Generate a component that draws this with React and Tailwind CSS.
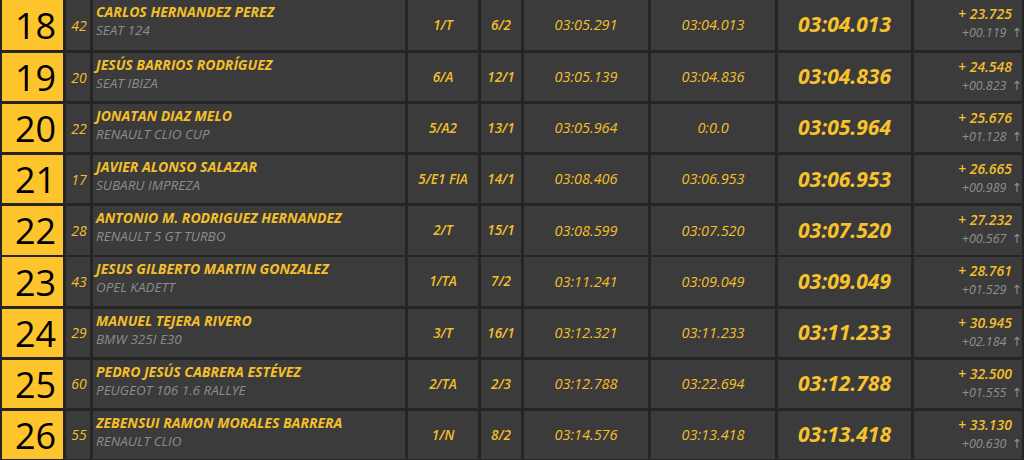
import React from 'react'

const rows = [
  ['18', '42', 'CARLOS HERNANDEZ PEREZ', 'SEAT 124', '1/T', '6/2', '03:05.291', '03:04.013', '03:04.013', '+ 23.725', '+00.119'],
  ['19', '20', 'JESÚS BARRIOS RODRÍGUEZ', 'SEAT IBIZA', '6/A', '12/1', '03:05.139', '03:04.836', '03:04.836', '+ 24.548', '+00.823'],
  ['20', '22', 'JONATAN DIAZ MELO', 'RENAULT CLIO CUP', '5/A2', '13/1', '03:05.964', '0:0.0', '03:05.964', '+ 25.676', '+01.128'],
  ['21', '17', 'JAVIER ALONSO SALAZAR', 'SUBARU IMPREZA', '5/E1 FIA', '14/1', '03:08.406', '03:06.953', '03:06.953', '+ 26.665', '+00.989'],
  ['22', '28', 'ANTONIO M. RODRIGUEZ HERNANDEZ', 'RENAULT 5 GT TURBO', '2/T', '15/1', '03:08.599', '03:07.520', '03:07.520', '+ 27.232', '+00.567'],
  ['23', '43', 'JESUS GILBERTO MARTIN GONZALEZ', 'OPEL KADETT', '1/TA', '7/2', '03:11.241', '03:09.049', '03:09.049', '+ 28.761', '+01.529'],
  ['24', '29', 'MANUEL TEJERA RIVERO', 'BMW 325I E30', '3/T', '16/1', '03:12.321', '03:11.233', '03:11.233', '+ 30.945', '+02.184'],
  ['25', '60', 'PEDRO JESÚS CABRERA ESTÉVEZ', 'PEUGEOT 106 1.6 RALLYE', '2/TA', '2/3', '03:12.788', '03:22.694', '03:12.788', '+ 32.500', '+01.555'],
  ['26', '55', 'ZEBENSUI RAMON MORALES BARRERA', 'RENAULT CLIO', '1/N', '8/2', '03:14.576', '03:13.418', '03:13.418', '+ 33.130', '+00.630'],
]

const cell = 'bg-[#3b3b3b] flex items-center justify-center'

function Row({ r, first }) {
  const [pos, num, name, car, cls, cat, t1, t2, best, diff, prev] = r
  return (
    <div className={`flex gap-[3px] ${first ? 'h-[50px]' : 'h-[48.2px]'}`}>
      <div className="w-[61px] bg-[#fdc52b] flex items-center justify-center text-black text-[36px] font-medium leading-none pl-[6px] pt-[2px]">
        {pos}
      </div>
      <div className={`${cell} w-[24px] text-[#f4bf2a] italic text-[14px] pl-[2px]`}>{num}</div>
      <div className="bg-[#3b3b3b] w-[312px] pl-[3px] pt-[3px] italic leading-[18px]">
        <div className="text-[#f4bf2a] font-bold text-[14px]">{name}</div>
        <div className="text-[#8c8c8c] text-[13.5px]">{car}</div>
      </div>
      <div className={`${cell} w-[70px] text-[#f4bf2a] italic font-semibold text-[13.5px]`}>{cls}</div>
      <div className={`${cell} w-[40px] text-[#f4bf2a] italic font-semibold text-[13.5px]`}>{cat}</div>
      <div className={`${cell} w-[124px] text-[#f4bf2a] italic font-medium text-[14.5px]`}>{t1}</div>
      <div className={`${cell} w-[124px] text-[#f4bf2a] italic font-medium text-[14.5px]`}>{t2}</div>
      <div className={`${cell} w-[133px] text-[#f8c22b] italic font-bold text-[21px]`}>{best}</div>
      <div className="bg-[#3b3b3b] w-[108px] flex flex-col items-end pr-[10px] pt-[4px] italic leading-[19px]">
        <div className="text-[#f4bf2a] font-semibold text-[14px]">{diff}</div>
        <div className="text-[#8f8f8f] text-[12.5px] -mr-[10px]">
          {prev}<span className="not-italic ml-[5px]">↑</span>
        </div>
      </div>
    </div>
  )
}

export default function App() {
  return (
    <div
      className="w-[1024px] h-[460px] overflow-hidden bg-[#252525] pl-[2px] flex flex-col gap-[2.94px]"
      style={{ fontFamily: '"Open Sans", "DejaVu Sans", sans-serif' }}
    >
      {rows.map((r, i) => (
        <Row key={r[0]} r={r} first={i === 0} />
      ))}
    </div>
  )
}
